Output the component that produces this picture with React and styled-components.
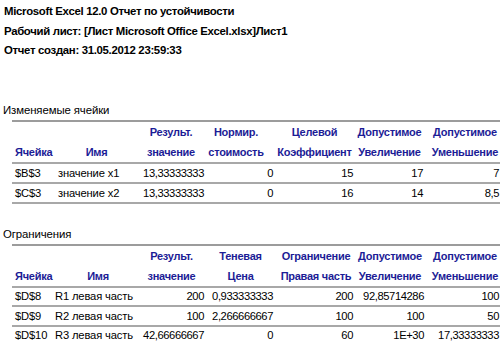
import React from 'react'
import styled, { createGlobalStyle } from 'styled-components'

const GlobalStyle = createGlobalStyle`
	body {
		margin: 0;
		background: #fff;
		font-family: "Liberation Sans", Arial, sans-serif;
		color: #000;
	}
`

const Page = styled.div`
	width: 503px;
	height: 344px;
	overflow: hidden;
	padding-top: 2px;
	box-sizing: border-box;
`

const TitleBlock = styled.div`
	padding-left: 4px;
	margin-bottom: 41px;
`

const TitleLine = styled.div`
	font-size: 11.4px;
	font-weight: 700;
	letter-spacing: -0.32px;
	line-height: 19.5px;
	white-space: nowrap;
`

const SectionLabel = styled.div`
	padding-left: 3px;
	font-size: 11.4px;
	letter-spacing: -0.1px;
	line-height: 16px;
	height: 16px;
	margin-bottom: 2px;
	white-space: nowrap;
`

const Table = styled.div`
	margin-left: 12px;
	width: 488px;
	border-top: 2px solid #9c9c9c;
	margin-bottom: ${p => p.$gap || 0}px;
`

const Row = styled.div`
	display: grid;
	grid-template-columns: ${p => p.$cols};
	height: ${p => p.$h}px;
	align-items: center;
	border-bottom: ${p => (p.$line ? '2px solid #a8a8a8' : 'none')};
`

const HeadCell = styled.div`
	font-size: 11px;
	font-weight: 700;
	letter-spacing: -0.25px;
	color: #1c1c96;
	text-align: ${p => p.$align || 'center'};
	white-space: nowrap;
	padding-right: ${p => p.$pr || 0}px;
	padding-left: ${p => p.$pl || 0}px;
`

const Cell = styled.div`
	font-size: 11.2px;
	letter-spacing: ${p => (p.$num ? '-0.4px' : '-0.15px')};
	text-align: ${p => (p.$num ? 'right' : 'left')};
	padding: ${p => (p.$num ? '0 1px 0 0' : `0 0 0 ${p.$pl}px`)};
	white-space: nowrap;
`

const cols1 = '43px 75px 75px 69px 80px 70px 76px'
const cols2 = '43px 83px 67px 69px 80px 71px 75px'

// [text lines, align, padding-left, padding-right]
const head1 = [
	[['', 'Ячейка'], 'left', 3, 0],
	[['', 'Имя'], 'center', 8, 0],
	[['Результ.', 'значение'], 'center', 7, 0],
	[['Нормир.', 'стоимость'], 'center', 0, 7],
	[['Целевой', 'Коэффициент'], 'center', 1, 0],
	[['Допустимое', 'Увеличение'], 'center', 1, 0],
	[['Допустимое', 'Уменьшение'], 'center', 6, 0],
]

const head2 = [
	[['', 'Ячейка'], 'left', 3, 0],
	[['', 'Имя'], 'center', 3, 0],
	[['Результ.', 'значение'], 'center', 0, 0],
	[['Теневая', 'Цена'], 'center', 2, 0],
	[['Ограничение', 'Правая часть'], 'center', 4, 0],
	[['Допустимое', 'Увеличение'], 'center', 1, 0],
	[['Допустимое', 'Уменьшение'], 'center', 5, 0],
]

const rows1 = [
	['$B$3', 'значение x1', '13,33333333', '0', '15', '17', '7'],
	['$C$3', 'значение x2', '13,33333333', '0', '16', '14', '8,5'],
]

const rows2 = [
	['$D$8', 'R1 левая часть', '200', '0,933333333', '200', '92,85714286', '100'],
	['$D$9', 'R2 левая часть', '100', '2,266666667', '100', '100', '50'],
	['$D$10', 'R3 левая часть', '42,66666667', '0', '60', '1E+30', '17,33333333'],
]

const ReportTable = ({ cols, head, rows, rowH, gap, namePad }) => (
	<Table $gap={gap}>
		{[0, 1].map(line => (
			<Row key={line} $cols={cols} $h={20} $line={line === 1}>
				{head.map(([text, align, pl, pr], i) => (
					<HeadCell key={i} $align={align} $pl={pl} $pr={pr}>
						{text[line]}
					</HeadCell>
				))}
			</Row>
		))}
		{rows.map((r, ri) => (
			<Row key={ri} $cols={cols} $h={rowH} $line>
				{r.map((v, i) => (
					<Cell key={i} $num={i > 1} $pl={i === 1 ? namePad : 3}>
						{v}
					</Cell>
				))}
			</Row>
		))}
	</Table>
)

export default function App() {
	return (
		<Page>
			<GlobalStyle />
			<TitleBlock>
				<TitleLine>Microsoft Excel 12.0 Отчет по устойчивости</TitleLine>
				<TitleLine>Рабочий лист: [Лист Microsoft Office Excel.xlsx]Лист1</TitleLine>
				<TitleLine>Отчет создан: 31.05.2012 23:59:33</TitleLine>
			</TitleBlock>

			<SectionLabel>Изменяемые ячейки</SectionLabel>
			<ReportTable cols={cols1} head={head1} rows={rows1} rowH={18} gap={22} namePad={3} />

			<SectionLabel>Ограничения</SectionLabel>
			<ReportTable cols={cols2} head={head2} rows={rows2} rowH={17.5} namePad={0} />
		</Page>
	)
}
